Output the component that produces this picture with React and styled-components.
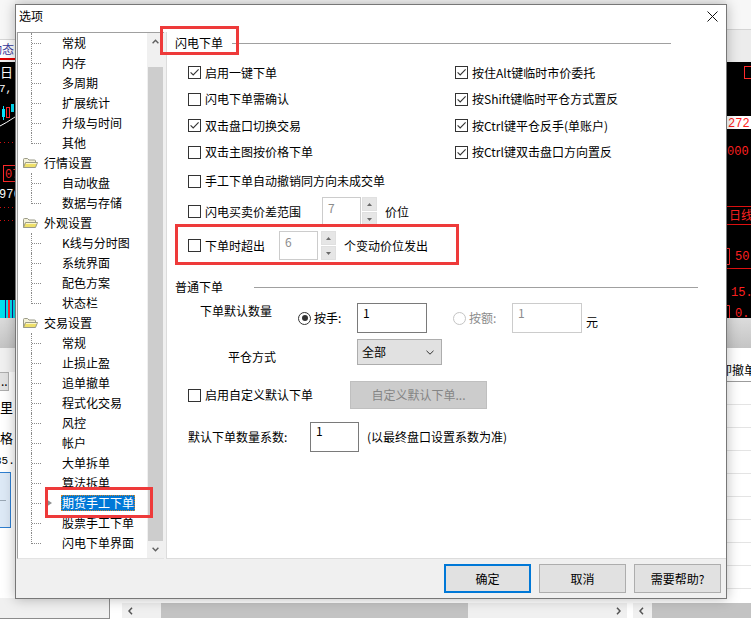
import React from "react";
import styled, { createGlobalStyle, css } from "styled-components";

const UI_FONT = `"Noto Sans CJK SC", "Noto Sans", sans-serif`;
const MONO = `"Liberation Mono", "DejaVu Sans Mono", monospace`;
const MARK_RED = "#ee3a3a";

const GlobalStyle = createGlobalStyle`
  * { box-sizing: border-box; }
  html, body { margin: 0; padding: 0; background: #fff; }
  body {
    font-family: ${UI_FONT};
    font-size: 12px;
    line-height: 16px;
    color: #000;
  }
`;

// red annotation frame drawn over a part of the dialog
const annotation = (inset) => css`
  position: relative;
  &::after {
    content: "";
    position: absolute;
    inset: ${inset};
    border: 3px solid ${MARK_RED};
    pointer-events: none;
    z-index: 5;
  }
`;

/* ---------------- background application ---------------- */

const Desktop = styled.div`
  position: relative;
  width: 751px;
  height: 626px;
  overflow: hidden;
`;

const Backdrop = styled.div`
  display: flex;
  flex-direction: column;
  height: 100%;
`;

const Band = styled.div`
  display: flex;
  justify-content: ${(p) => p.$justify || "space-between"};
  height: ${(p) => p.$h}px;
  flex-shrink: 0;
  background: ${(p) => p.$bg || "#fff"};
`;

const EdgeCol = styled.div`
  width: ${(p) => p.$w}px;
  flex-shrink: 0;
  display: flex;
  flex-direction: column;
  overflow: hidden;
`;

const Fill = styled.div`
  height: ${(p) => p.$h}px;
  flex-shrink: 0;
  background: ${(p) => p.$bg || "transparent"};
  border-bottom: ${(p) => (p.$rule ? `1px solid ${p.$rule}` : "0")};
`;

const ChartTab = styled.div`
  height: 20px;
  flex-shrink: 0;
  background: #fff;
  color: #3a3a9c;
  white-space: nowrap;
  text-indent: -10px;
  line-height: 18px;
  border-bottom: 2px solid #e00000;
`;

const MiniButton = styled.div`
  width: 9px;
  height: 19px;
  flex-shrink: 0;
  background: #e1e1e1;
  border: 1px solid #adadad;
  border-left: 0;
  line-height: 16px;
  padding-left: 1px;
  overflow: hidden;
`;

const EdgeText = styled.div`
  height: ${(p) => p.$h}px;
  flex-shrink: 0;
  display: flex;
  align-items: center;
  white-space: nowrap;
  font-size: ${(p) => p.$size || 13}px;
  font-family: ${(p) => (p.$mono ? MONO : UI_FONT)};
  margin-left: ${(p) => p.$shift || 0}px;
`;

const BlueBox = styled.div`
  height: 56px;
  width: 11px;
  flex-shrink: 0;
  margin-top: 2px;
  background: #dde9f6;
  border: 1px solid #2f7fd0;
  border-left: 0;
  display: flex;
  align-items: center;
  &::before {
    content: "";
    width: 6px;
    height: 1px;
    background: #9aa7b4;
  }
`;

const TableHead = styled.div`
  height: 24px;
  flex-shrink: 0;
  white-space: nowrap;
  text-indent: -6px;
  line-height: 24px;
  border-bottom: 1px solid #9c9c9c;
`;

const TableLine = styled.div`
  height: 23px;
  flex-shrink: 0;
  border-bottom: 1px solid #e4e4e4;
`;

const BottomPanel = styled.div`
  width: 110px;
  height: 21px;
  flex-shrink: 0;
  background: #f0f0f0;
  border-right: 1px solid #8c8c8c;
  border-bottom: 1px solid #8c8c8c;
`;

const HScroll = styled.div`
  width: ${(p) => p.$w}px;
  height: 15px;
  margin: 5px 0 0 ${(p) => p.$ml}px;
  flex-shrink: 0;
  display: flex;
  background: #f0f0f0;
`;

const HArrow = styled.div`
  width: 17px;
  flex-shrink: 0;
  display: flex;
  align-items: center;
  justify-content: center;
`;

const HTrack = styled.div`
  flex: 1;
  display: flex;
  padding-left: ${(p) => p.$lead}px;
`;

const HThumb = styled.div`
  width: ${(p) => (p.$w ? `${p.$w}px` : "auto")};
  flex: ${(p) => (p.$w ? "none" : 1)};
  background: #c3c3c3;
`;

const LeftChart = () => (
  <svg width="15" height="256" viewBox="0 0 15 256">
    <text x="0" y="15" fill="#fff" fontSize="13" fontFamily="Noto Sans CJK SC">日</text>
    <text x="-1" y="30" fill="#fff" fontSize="11" fontFamily="Liberation Mono">7, 1</text>
    <line x1="3.5" y1="44" x2="3.5" y2="58" stroke="#00e5ff" />
    <rect x="2" y="47" width="3" height="8" fill="#00e5ff" />
    <rect x="6.5" y="45.5" width="3" height="10" fill="none" stroke="#ff2a2a" />
    <rect x="11" y="42" width="3" height="8" fill="#00e5ff" />
    <path d="M0 64 Q6 61 15 55" stroke="#fff" fill="none" />
    <line x1="0" y1="80.5" x2="15" y2="80.5" stroke="#d01010" strokeDasharray="1 3" />
    <rect x="3.5" y="103.5" width="13" height="16" fill="none" stroke="#ff2a2a" />
    <text x="5" y="116" fill="#ff2a2a" fontSize="12" fontFamily="Liberation Mono">07</text>
    <text x="-1" y="136" fill="#fff" fontSize="12" fontFamily="Liberation Mono">976</text>
    <line x1="0" y1="145.5" x2="15" y2="145.5" stroke="#d01010" strokeDasharray="1 3" />
    <line x1="0" y1="158.5" x2="15" y2="158.5" stroke="#d01010" strokeDasharray="1 3" />
    <rect x="0" y="238" width="15" height="18" fill="#00e0ee" />
    <rect x="5" y="238" width="1" height="18" fill="#1a1a8a" />
    <rect x="8" y="238" width="2" height="18" fill="#ff2a2a" />
    <rect x="12" y="238" width="1" height="18" fill="#1a1a8a" />
  </svg>
);

const RightChart = () => (
  <svg width="25" height="256" viewBox="0 0 25 256">
    <rect x="18.5" y="4.5" width="8" height="12" fill="none" stroke="#ff2a2a" />
    <rect x="0" y="54" width="25" height="13" fill="#fff" />
    <text x="2" y="65" fill="#ff2020" fontSize="12" fontFamily="Liberation Mono">272.</text>
    <text x="1" y="93" fill="#ff2020" fontSize="12" fontFamily="Liberation Mono">000.</text>
    <line x1="0" y1="144.5" x2="25" y2="144.5" stroke="#e01010" />
    <text x="3" y="158" fill="#ff2020" fontSize="12" fontFamily="Noto Sans CJK SC">日线</text>
    <line x1="0" y1="162.5" x2="25" y2="162.5" stroke="#e01010" />
    <path d="M1 186.5 H3.5 V202.5 H1" fill="none" stroke="#ff2a2a" />
    <text x="9" y="198" fill="#ff2020" fontSize="12" fontFamily="Liberation Mono">50</text>
    <line x1="0" y1="206.5" x2="25" y2="206.5" stroke="#e01010" />
    <text x="5" y="234" fill="#ff2020" fontSize="12" fontFamily="Liberation Mono">15.</text>
    <path d="M1 243.5 H3.5 V256" fill="none" stroke="#ff2a2a" />
    <text x="9" y="255" fill="#ff2020" fontSize="12" fontFamily="Liberation Mono">0.</text>
  </svg>
);

const SideChevron = ({ dir }) => (
  <svg width="5" height="8" viewBox="0 0 5 8">
    <polyline
      points={dir === "left" ? "4,0.8 1,4 4,7.2" : "1,0.8 4,4 1,7.2"}
      fill="none"
      stroke="#555"
      strokeWidth="1.5"
    />
  </svg>
);

/* ---------------- dialog frame ---------------- */

const Dialog = styled.div`
  position: absolute;
  left: 15px;
  top: 4px;
  width: 712px;
  height: 595px;
  display: flex;
  flex-direction: column;
  background: #f0f0f0;
  border: 1px solid #777;
  box-shadow: 0 0 12px rgba(0, 0, 0, 0.28);
`;

const TitleBar = styled.div`
  height: 27px;
  flex-shrink: 0;
  display: flex;
  justify-content: space-between;
  align-items: flex-start;
  padding: 3px 7px 0 3px;
  background: #fff;
`;

const Title = styled.span`
  line-height: 16px;
`;

const CloseButton = styled.span`
  width: 14px;
  height: 14px;
  margin-top: 1px;
  display: flex;
  align-items: center;
  justify-content: center;
`;

const Body = styled.div`
  flex: 1;
  min-height: 0;
  display: flex;
  gap: 2px;
  padding-left: 1px;
`;

const Footer = styled.footer`
  height: 39px;
  flex-shrink: 0;
  display: flex;
  justify-content: flex-end;
  gap: 8px;
  padding: 5px 5px 0 0;
`;

const DialogButton = styled.button`
  width: 87px;
  height: 29px;
  padding: 0;
  font-family: ${UI_FONT};
  font-size: 12px;
  color: #000;
  background: #e1e1e1;
  border: ${(p) => (p.$primary ? "2px solid #0078d7" : "1px solid #adadad")};
`;

/* ---------------- option tree ---------------- */

const TreePane = styled.div`
  width: 147px;
  flex-shrink: 0;
  display: flex;
  background: #fff;
  border-left: 1px solid #a0a0a0;
  border-top: 1px solid #a0a0a0;
  border-bottom: 1px solid #e3e3e3;
`;

const TreeList = styled.ul`
  flex: 1;
  margin: 0;
  padding: 0;
  list-style: none;
`;

const TreeRow = styled.li`
  height: 20px;
  display: flex;
  align-items: center;
  white-space: nowrap;
  padding-left: ${(p) => (p.$folder ? 4 : 13)}px;
`;

const Guide = styled.span`
  position: relative;
  width: 10px;
  height: 20px;
  flex-shrink: 0;
  &::before {
    content: "";
    position: absolute;
    left: 0;
    top: 0;
    height: ${(p) => (p.$last ? 11 : 20)}px;
    border-left: 1px dotted #8a8a8a;
  }
  &::after {
    content: "";
    position: absolute;
    left: 1px;
    top: 10px;
    width: 9px;
    border-top: 1px dotted #8a8a8a;
  }
`;

const Lead = styled.span`
  width: 21px;
  flex-shrink: 0;
  display: flex;
  align-items: center;
  padding-left: 5px;
`;

const Pointer = styled.span`
  width: 0;
  height: 0;
  border-top: 4px solid transparent;
  border-bottom: 4px solid transparent;
  border-left: 6px solid #8e8e8e;
`;

const NodeLabel = styled.span`
  height: 16px;
  line-height: 16px;
  padding: 0 1px;
  margin-left: ${(p) => p.$gap ?? -1}px;
  ${(p) =>
    p.$selected &&
    css`
      background: #0078d7;
      color: #fff;
      outline: 1px dotted #c8842c;
      outline-offset: -1px;
    `}
  ${(p) => p.$marked && annotation("-8px -18px -7px -16px")}
`;

const VScroll = styled.div`
  width: 17px;
  flex-shrink: 0;
  display: flex;
  flex-direction: column;
  background: #f0f0f0;
`;

const ScrollArrow = styled.div`
  height: 17px;
  flex-shrink: 0;
  display: flex;
  align-items: center;
  justify-content: center;
`;

const ScrollTrack = styled.div`
  flex: 1;
  display: flex;
  flex-direction: column;
  padding: 17px 1px 0;
`;

const ScrollThumb = styled.div`
  flex: 1;
  background: #cdcdcd;
`;

const Chevron = ({ dir }) => (
  <svg width="7" height="5" viewBox="0 0 7 5">
    <polyline
      points={dir === "up" ? "0.6,4.2 3.5,1.2 6.4,4.2" : "0.6,0.8 3.5,3.8 6.4,0.8"}
      fill="none"
      stroke="#606060"
      strokeWidth="1.4"
    />
  </svg>
);

const FolderIcon = () => (
  <svg width="16" height="12" viewBox="0 0 16 12">
    <path
      d="M1.5 10.5 V2.5 Q1.5 1.5 2.5 1.5 H5.5 L7 3 H12.5 Q13.5 3 13.5 4 V5"
      fill="#f4f1d8"
      stroke="#9a9a88"
    />
    <path d="M1.5 10.5 L3.5 5.5 H15.5 L13.5 10.5 Z" fill="#efe06a" stroke="#9a9a88" strokeLinejoin="round" />
    <path d="M4 6.5 H14.5" stroke="#fbf6c8" />
  </svg>
);

const TREE = [
  { title: null, items: ["常规", "内存", "多周期", "扩展统计", "升级与时间", "其他"] },
  { title: "行情设置", items: ["自动收盘", "数据与存储"] },
  { title: "外观设置", items: ["K线与分时图", "系统界面", "配色方案", "状态栏"] },
  {
    title: "交易设置",
    items: [
      "常规",
      "止损止盈",
      "追单撤单",
      "程式化交易",
      "风控",
      "帐户",
      "大单拆单",
      "算法拆单",
      "期货手工下单",
      "股票手工下单",
      "闪电下单界面",
    ],
  },
];

const SELECTED = "期货手工下单";

const OptionTree = () => (
  <TreePane>
    <TreeList>
      {TREE.map((group) => (
        <React.Fragment key={group.title || "system"}>
          {group.title && (
            <TreeRow $folder>
              <FolderIcon />
              <NodeLabel $gap={5}>{group.title}</NodeLabel>
            </TreeRow>
          )}
          {group.items.map((item, i) => {
            const selected = item === SELECTED;
            return (
              <TreeRow key={item + i}>
                <Guide $last={i === group.items.length - 1} />
                <Lead>{selected && <Pointer />}</Lead>
                <NodeLabel $selected={selected} $marked={selected}>
                  {item}
                </NodeLabel>
              </TreeRow>
            );
          })}
        </React.Fragment>
      ))}
    </TreeList>
    <VScroll>
      <ScrollArrow>
        <Chevron dir="up" />
      </ScrollArrow>
      <ScrollTrack>
        <ScrollThumb />
      </ScrollTrack>
      <ScrollArrow>
        <Chevron dir="down" />
      </ScrollArrow>
    </VScroll>
  </TreePane>
);

/* ---------------- option page ---------------- */

const OptionsPane = styled.section`
  flex: 1;
  display: flex;
  flex-direction: column;
  background: #fff;
  border-left: 1px solid #dcdcdc;
  border-bottom: 1px solid #dcdcdc;
`;

const GroupHeader = styled.div`
  height: 22px;
  flex-shrink: 0;
  display: flex;
  align-items: center;
  padding: 0 ${(p) => p.$right}px 0 8px;
  margin-top: ${(p) => p.$mt || 0}px;
`;

const Legend = styled.span`
  line-height: 16px;
  white-space: nowrap;
  ${(p) => p.$marked && annotation("-9px -16px -4px -15px")}
`;

const GroupRule = styled.div`
  flex: 1;
  height: 1px;
  margin: 1px 0 0 ${(p) => p.$gap}px;
  background: #a0a0a0;
`;

const CheckGrid = styled.div`
  display: grid;
  grid-template-columns: 267px auto;
  grid-template-rows: 27px 26px 27px 26px;
  align-items: center;
  padding-left: 21px;
  margin-top: 5px;
`;

const OptionRow = styled.div`
  height: ${(p) => p.$h}px;
  flex-shrink: 0;
  display: flex;
  align-items: center;
  white-space: nowrap;
  margin-top: ${(p) => p.$mt || 0}px;
  padding-left: ${(p) => p.$indent || 0}px;
`;

const HighlightRow = styled(OptionRow)`
  width: 284px;
  margin-left: 8px;
  ${annotation("-7px 0 -5px 0")}
`;

const CheckItem = styled.label`
  display: inline-flex;
  align-items: center;
  gap: 4px;
  white-space: nowrap;
  flex-shrink: 0;
  width: ${(p) => (p.$w ? `${p.$w}px` : "auto")};
`;

const Box = styled.span`
  width: 13px;
  height: 13px;
  flex-shrink: 0;
  display: inline-flex;
  align-items: center;
  justify-content: center;
  background: #fff;
  border: 1px solid #333;
`;

const CheckMark = () => (
  <svg width="11" height="11" viewBox="0 0 11 11">
    <path d="M1.6 5.4 L4.2 8 L9.6 2.4" fill="none" stroke="#333" strokeWidth="1.1" />
  </svg>
);

const Check = ({ checked, w, children }) => (
  <CheckItem $w={w}>
    <Box>{checked && <CheckMark />}</Box>
    <span>{children}</span>
  </CheckItem>
);

const RadioItem = styled.label`
  display: inline-flex;
  align-items: center;
  gap: 3px;
  width: 59px;
  flex-shrink: 0;
  margin-left: ${(p) => p.$ml || 0}px;
  color: ${(p) => (p.$disabled ? "#8c8c8c" : "#000")};
`;

const RadioDot = styled.span`
  width: 13px;
  height: 13px;
  flex-shrink: 0;
  border-radius: 50%;
  background: #fff;
  border: 1px solid ${(p) => (p.$disabled ? "#c4c4c4" : "#333")};
  display: inline-flex;
  align-items: center;
  justify-content: center;
  &::after {
    content: "";
    display: ${(p) => (p.$checked ? "block" : "none")};
    width: 6px;
    height: 6px;
    border-radius: 50%;
    background: #333;
  }
`;

const FieldLabel = styled.span`
  width: ${(p) => p.$w}px;
  flex-shrink: 0;
  align-self: ${(p) => p.$align || "center"};
  white-space: nowrap;
`;

const TextBox = styled.div`
  width: ${(p) => p.$w}px;
  height: ${(p) => p.$h || 30}px;
  flex-shrink: 0;
  padding: ${(p) => p.$pt ?? 1}px 0 0 5px;
  background: #fff;
  border: 1px solid ${(p) => (p.$disabled ? "#cccccc" : "#7a7a7a")};
  color: ${(p) => (p.$disabled ? "#8c8c8c" : "#000")};
`;

const Spinner = styled.div`
  display: flex;
  gap: ${(p) => p.$gap}px;
  flex-shrink: 0;
`;

const SpinButtons = styled.div`
  width: 15px;
  display: flex;
  flex-direction: column;
  gap: 1px;
`;

const SpinButton = styled.span`
  height: 14px;
  display: flex;
  align-items: center;
  justify-content: center;
  background: #e6e6e6;
  border: 1px solid #e0e0e0;
`;

const SpinArrow = ({ dir }) => (
  <svg width="5" height="3" viewBox="0 0 5 3">
    <polygon points={dir === "up" ? "0,3 2.5,0 5,3" : "0,0 2.5,3 5,0"} fill="#6a6a6a" />
  </svg>
);

const SpinBox = ({ value, gap }) => (
  <Spinner $gap={gap}>
    <TextBox $w={39} $h={29} $pt={2} $disabled>
      {value}
    </TextBox>
    <SpinButtons>
      <SpinButton>
        <SpinArrow dir="up" />
      </SpinButton>
      <SpinButton>
        <SpinArrow dir="down" />
      </SpinButton>
    </SpinButtons>
  </Spinner>
);

const Trailing = styled.span`
  margin-left: ${(p) => p.$ml || 8}px;
  align-self: ${(p) => p.$align || "center"};
  margin-bottom: ${(p) => p.$mb || 0}px;
  white-space: nowrap;
`;

const Select = styled.div`
  width: 85px;
  height: 26px;
  flex-shrink: 0;
  display: flex;
  align-items: center;
  justify-content: space-between;
  padding: 0 7px 0 4px;
  background: #e1e1e1;
  border: 1px solid #adadad;
`;

const SelectChevron = () => (
  <svg width="8" height="5" viewBox="0 0 8 5">
    <polyline points="0.5,0.8 4,4.2 7.5,0.8" fill="none" stroke="#333" strokeWidth="1" />
  </svg>
);

const GhostButton = styled.div`
  width: 137px;
  height: 28px;
  flex-shrink: 0;
  display: flex;
  align-items: center;
  justify-content: center;
  background: #cccccc;
  border: 1px solid #bfbfbf;
  color: #858585;
`;

const FlashOrderPage = () => (
  <OptionsPane>
    <GroupHeader $right={55}>
      <Legend $marked>闪电下单</Legend>
      <GroupRule $gap={9} />
    </GroupHeader>

    <CheckGrid>
      <Check checked>启用一键下单</Check>
      <Check checked>按住Alt键临时市价委托</Check>
      <Check>闪电下单需确认</Check>
      <Check checked>按Shift键临时平仓方式置反</Check>
      <Check checked>双击盘口切换交易</Check>
      <Check checked>按Ctrl键平仓反手(单账户)</Check>
      <Check>双击主图按价格下单</Check>
      <Check checked>按Ctrl键双击盘口方向置反</Check>
    </CheckGrid>

    <OptionRow $h={32} $indent={21}>
      <Check>手工下单自动撤销同方向未成交单</Check>
    </OptionRow>

    <OptionRow $h={29} $indent={21}>
      <Check w={134}>闪电买卖价差范围</Check>
      <SpinBox value="7" gap={1} />
      <Trailing>价位</Trailing>
    </OptionRow>

    <HighlightRow $h={29} $mt={5} $indent={13}>
      <Check w={91}>下单时超出</Check>
      <SpinBox value="6" gap={3} />
      <Trailing>个变动价位发出</Trailing>
    </HighlightRow>

    <GroupHeader $right={28} $mt={16}>
      <Legend>普通下单</Legend>
      <GroupRule $gap={31} />
    </GroupHeader>

    <OptionRow $h={30} $mt={5} $indent={33}>
      <FieldLabel $w={98} $align="flex-start">
        下单默认数量
      </FieldLabel>
      <RadioItem>
        <RadioDot $checked />
        按手:
      </RadioItem>
      <TextBox $w={70}>1</TextBox>
      <RadioItem $ml={26} $disabled>
        <RadioDot $disabled />
        按额:
      </RadioItem>
      <TextBox $w={70} $disabled>
        1
      </TextBox>
      <Trailing $ml={4} $align="flex-end" $mb={3}>
        元
      </Trailing>
    </OptionRow>

    <OptionRow $h={26} $mt={6} $indent={61}>
      <FieldLabel $w={129} $align="flex-end">
        平仓方式
      </FieldLabel>
      <Select>
        <span>全部</span>
        <SelectChevron />
      </Select>
    </OptionRow>

    <OptionRow $h={28} $mt={16} $indent={21}>
      <Check w={162}>启用自定义默认下单</Check>
      <GhostButton>自定义默认下单...</GhostButton>
    </OptionRow>

    <OptionRow $h={30} $mt={13} $indent={21}>
      <FieldLabel $w={122}>默认下单数量系数:</FieldLabel>
      <TextBox $w={49} $pt={0}>
        1
      </TextBox>
      <Trailing>(以最终盘口设置系数为准)</Trailing>
    </OptionRow>
  </OptionsPane>
);

const CloseIcon = () => (
  <svg width="11" height="11" viewBox="0 0 11 11">
    <path d="M0.5 0.5 L10.5 10.5 M10.5 0.5 L0.5 10.5" stroke="#111" strokeWidth="1" />
  </svg>
);

export default function App() {
  return (
    <>
      <GlobalStyle />
      <Desktop>
        <Backdrop>
          <Band $h={62} $bg="#f3f3f3">
            <EdgeCol $w={15}>
              <Fill $h={40} $bg="#f7f7f7" $rule="#d6d6d6" />
              <ChartTab>动态</ChartTab>
            </EdgeCol>
            <EdgeCol $w={25}>
              <Fill $h={30} $bg="#f7f7f7" $rule="#d4d4d4" />
              <Fill $h={32} $bg="#ececec" />
            </EdgeCol>
          </Band>

          <Band $h={256} $bg="#000">
            <LeftChart />
            <RightChart />
          </Band>

          <Band $h={30} $bg="linear-gradient(#dcdcdc, #c4c4c4)" />

          <Band $h={250}>
            <EdgeCol $w={15}>
              <Fill $h={24} $bg="#f0f0f0" />
              <MiniButton>...</MiniButton>
              <EdgeText $h={32}>里</EdgeText>
              <EdgeText $h={29}>格</EdgeText>
              <EdgeText $h={18} $size={11} $shift={-5} $mono>
                35.
              </EdgeText>
              <BlueBox />
            </EdgeCol>
            <EdgeCol $w={25}>
              <Fill $h={10} />
              <TableHead>即撤单</TableHead>
              {Array.from({ length: 9 }, (_, i) => (
                <TableLine key={i} />
              ))}
            </EdgeCol>
          </Band>

          <Band $h={28} $justify="flex-start">
            <BottomPanel />
            <HScroll $w={505} $ml={12}>
              <HArrow>
                <SideChevron dir="left" />
              </HArrow>
              <HTrack $lead={22}>
                <HThumb $w={307} />
              </HTrack>
              <HArrow>
                <SideChevron dir="right" />
              </HArrow>
            </HScroll>
            <HScroll $w={118} $ml={6}>
              <HArrow>
                <SideChevron dir="left" />
              </HArrow>
              <HTrack $lead={2}>
                <HThumb />
              </HTrack>
            </HScroll>
          </Band>
        </Backdrop>

        <Dialog>
          <TitleBar>
            <Title>选项</Title>
            <CloseButton>
              <CloseIcon />
            </CloseButton>
          </TitleBar>
          <Body>
            <OptionTree />
            <FlashOrderPage />
          </Body>
          <Footer>
            <DialogButton $primary>确定</DialogButton>
            <DialogButton>取消</DialogButton>
            <DialogButton>需要帮助?</DialogButton>
          </Footer>
        </Dialog>
      </Desktop>
    </>
  );
}
